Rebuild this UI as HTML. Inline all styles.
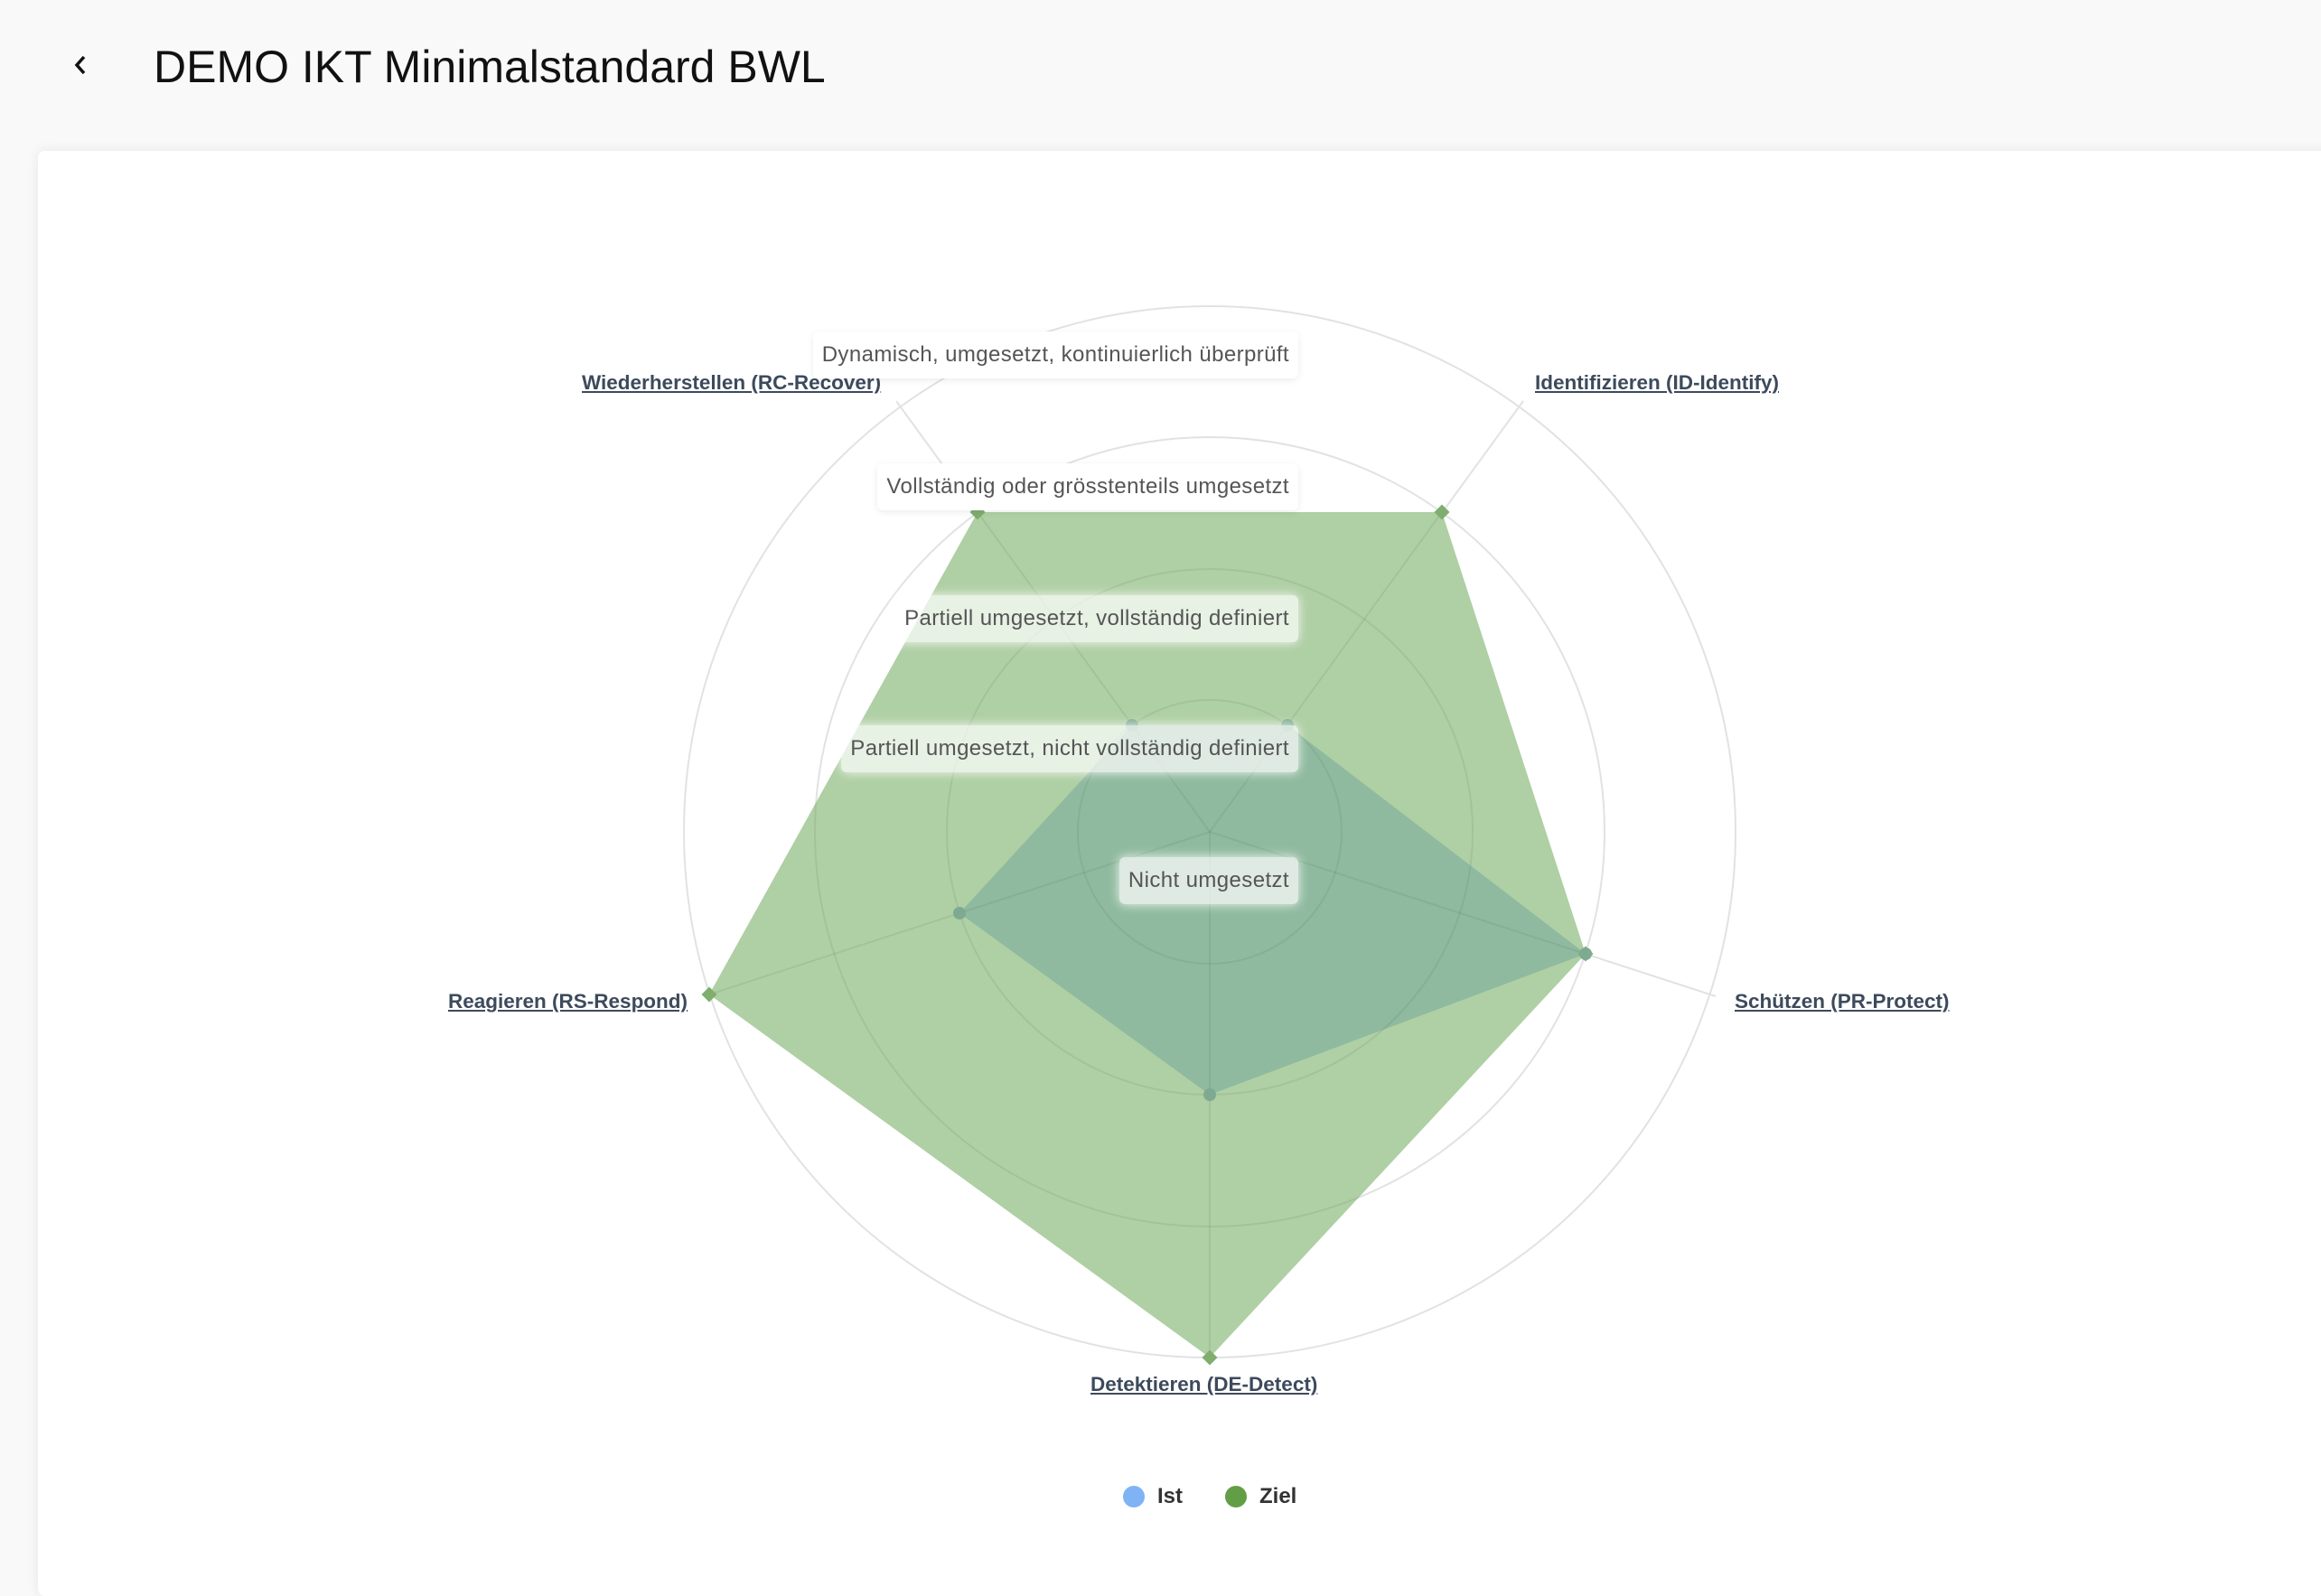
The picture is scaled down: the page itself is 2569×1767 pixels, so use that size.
<!DOCTYPE html>
<html><head><meta charset="utf-8"><style>
body{margin:0;width:2569px;height:1690px;background:#f9f9f9;overflow:hidden;font-family:"Liberation Sans",sans-serif;position:relative}
.title{position:absolute;left:170px;top:45px;font-size:50px;color:#111;white-space:nowrap}
.card{position:absolute;left:42px;top:167px;width:2600px;height:1600px;background:#fff;border-radius:8px;box-shadow:0 0 14px rgba(0,0,0,0.08)}
.ax{position:absolute;font-size:22.5px;font-weight:bold;color:#3d4a5c;text-decoration:underline;white-space:nowrap;line-height:1}
.lv{position:absolute;right:1132px;height:52px;line-height:52px;padding:0 10px;font-size:24px;letter-spacing:0.4px;color:#555;border-radius:6px;white-space:nowrap;box-shadow:0 0 12px rgba(255,255,255,0.9)}
.lg{position:absolute;top:1643px;font-size:24px;font-weight:bold;color:#333}
.dot{position:absolute;width:24px;height:24px;border-radius:50%;top:1645px}
</style></head><body>
<svg style="position:absolute;left:78px;top:58px" width="24" height="28" viewBox="0 0 24 28"><path d="M15 5 L7 14 L15 23" fill="none" stroke="#111" stroke-width="3.5"/></svg>
<div class="title">DEMO IKT Minimalstandard BWL</div>
<div class="card"></div>
<svg style="position:absolute;left:0;top:0" width="2569" height="1690">
<defs><clipPath id="zc"><polygon points="1596,567 1755,1056 1339,1503 785,1101 1082,567"/></clipPath></defs>
<g fill="none" stroke="#e2e2e2" stroke-width="2">
<circle cx="1339" cy="921" r="146"/><circle cx="1339" cy="921" r="291"/><circle cx="1339" cy="921" r="437"/><circle cx="1339" cy="921" r="582"/>
<line x1="1339" y1="921" x2="1686" y2="444"/><line x1="1339" y1="921" x2="1899" y2="1103"/><line x1="1339" y1="921" x2="1339" y2="1503"/><line x1="1339" y1="921" x2="779" y2="1103"/><line x1="1339" y1="921" x2="992" y2="444"/>
</g>
<polygon points="1596,567 1755,1056 1339,1503 785,1101 1082,567" fill="#afcfa4"/>
<polygon points="1425,803 1755,1056 1339,1212 1062,1011 1253,803" fill="#8fba9f"/>
<g fill="none" stroke="rgba(0,0,0,0.06)" stroke-width="2" clip-path="url(#zc)">
<circle cx="1339" cy="921" r="146"/><circle cx="1339" cy="921" r="291"/><circle cx="1339" cy="921" r="437"/>
<line x1="1339" y1="921" x2="1596" y2="567"/><line x1="1339" y1="921" x2="1755" y2="1056"/><line x1="1339" y1="921" x2="1339" y2="1503"/><line x1="1339" y1="921" x2="785" y2="1101"/><line x1="1339" y1="921" x2="1082" y2="567"/>
</g>
<g fill="#7fae6e"><rect x="1590" y="561" width="12" height="12" transform="rotate(45 1596 567)"/><rect x="1749" y="1050" width="12" height="12" transform="rotate(45 1755 1056)"/><rect x="1333" y="1497" width="12" height="12" transform="rotate(45 1339 1503)"/><rect x="779" y="1095" width="12" height="12" transform="rotate(45 785 1101)"/><rect x="1076" y="561" width="12" height="12" transform="rotate(45 1082 567)"/></g>
<g fill="#7eaa92"><circle cx="1425" cy="803" r="7"/><circle cx="1755" cy="1056" r="7"/><circle cx="1339" cy="1212" r="7"/><circle cx="1062" cy="1011" r="7"/><circle cx="1253" cy="803" r="7"/></g>
</svg>
<div class="ax" style="left:644px;top:413px">Wiederherstellen (RC-Recover)</div>
<div class="ax" style="left:1699px;top:413px">Identifizieren (ID-Identify)</div>
<div class="ax" style="left:1920px;top:1098px">Schützen (PR-Protect)</div>
<div class="ax" style="left:496px;top:1098px">Reagieren (RS-Respond)</div>
<div class="ax" style="left:1207px;top:1522px">Detektieren (DE-Detect)</div>
<div class="lv" style="top:367px;background:#fff;box-shadow:0 2px 8px rgba(0,0,0,0.08)">Dynamisch, umgesetzt, kontinuierlich überprüft</div>
<div class="lv" style="top:513px;background:#fff;box-shadow:0 2px 8px rgba(0,0,0,0.08)">Vollständig oder grösstenteils umgesetzt</div>
<div class="lv" style="top:659px;background:rgba(255,255,255,0.7)">Partiell umgesetzt, vollständig definiert</div>
<div class="lv" style="top:803px;background:rgba(255,255,255,0.7)">Partiell umgesetzt, nicht vollständig definiert</div>
<div class="lv" style="top:949px;background:rgba(255,255,255,0.7)">Nicht umgesetzt</div>
<div class="dot" style="left:1243px;background:#7fb3f5"></div><div class="lg" style="left:1281px">Ist</div>
<div class="dot" style="left:1356px;background:#629e45"></div><div class="lg" style="left:1394px">Ziel</div>
</body></html>
